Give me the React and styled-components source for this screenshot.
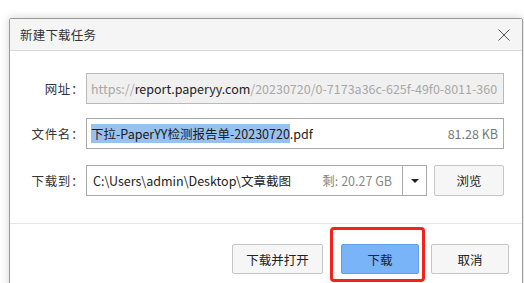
import React from 'react';
import styled, { createGlobalStyle } from 'styled-components';

const GlobalStyle = createGlobalStyle`
  html, body {
    margin: 0;
    padding: 0;
    background: #ffffff;
    overflow: hidden;
  }
  body {
    font-family: "Noto Sans CJK SC", "Noto Sans", sans-serif;
    color: #333;
  }
`;

const Page = styled.div`
  width: 524px;
  height: 283px;
  padding: 18px 0 0 9px;
  box-sizing: border-box;
  overflow: hidden;
`;

const Window = styled.div`
  position: relative;
  width: 514px;
  height: 300px;
  box-sizing: border-box;
  border: 1px solid #9a9a9a;
  border-radius: 2px 2px 0 0;
  background: #ffffff;
  box-shadow: 0 0 10px rgba(0, 0, 0, 0.18);
  display: flex;
  flex-direction: column;
`;

const TitleBar = styled.div`
  height: 31px;
  display: flex;
  align-items: center;
  justify-content: space-between;
  padding: 0 12px 0 10px;
  background: #f5f5f5;
  border-bottom: 1px solid #d9d9d9;
  font-size: 12.5px;
  letter-spacing: 0.2px;
  color: #333;
`;

const CloseIcon = styled.svg`
  width: 12px;
  height: 12px;
  display: block;
`;

const Body = styled.div`
  padding: 22px 18px 0 0;
  display: flex;
  flex-direction: column;
  gap: 14px;
`;

const Row = styled.div`
  display: grid;
  grid-template-columns: 74px 1fr;
  column-gap: 2px;
  align-items: center;
  margin-top: ${({ $extra }) => $extra || 0}px;
`;

const Label = styled.div`
  text-align: right;
  font-size: 12.5px;
  letter-spacing: 0.6px;
  color: #333;
`;

const Field = styled.div`
  height: 31px;
  box-sizing: border-box;
  border: 1px solid ${({ $disabled }) => ($disabled ? '#b9b9b9' : '#a9a9a9')};
  background: ${({ $disabled }) => ($disabled ? '#f0f0f0' : '#ffffff')};
  display: flex;
  align-items: center;
  padding: 0 5px 0 4px;
  font-size: 12.5px;
  white-space: nowrap;
  overflow: hidden;
  color: #222;
`;

const Muted = styled.span`
  color: #a8a8a8;
`;

const Selected = styled.span`
  background: #99c1f0;
  color: #1a1a1a;
`;

const Size = styled.span`
  margin-left: auto;
  color: #777;
`;

const PathLine = styled.div`
  display: flex;
  gap: 7px;
`;

const Combo = styled.div`
  flex: 1;
  height: 31px;
  box-sizing: border-box;
  border: 1px solid #a9a9a9;
  display: flex;
  font-size: 12.5px;
  color: #222;
`;

const ComboText = styled.div`
  flex: 1;
  display: flex;
  align-items: center;
  padding: 0 10px 0 6px;
  white-space: nowrap;
`;

const Free = styled.span`
  margin-left: auto;
  color: #888;
`;

const ComboArrow = styled.div`
  width: 23px;
  border-left: 1px solid #a9a9a9;
  display: flex;
  align-items: center;
  justify-content: center;

  &::after {
    content: '';
    border-left: 4px solid transparent;
    border-right: 4px solid transparent;
    border-top: 4px solid #222;
  }
`;

const Divider = styled.div`
  height: 1px;
  background: #e6e6e6;
  margin-top: 27px;
`;

const Footer = styled.div`
  display: flex;
  justify-content: flex-end;
  padding: 20px 13px 0 0;
`;

const Button = styled.div`
  position: relative;
  width: ${({ $w }) => $w || 78}px;
  height: 30px;
  box-sizing: border-box;
  margin-left: ${({ $gap }) => $gap || 0}px;
  border: 1px solid ${({ $primary }) => ($primary ? '#5e9fe8' : '#c6c6c6')};
  background: ${({ $primary }) => ($primary ? '#79b3f8' : '#f6f6f6')};
  border-radius: 2px;
  display: flex;
  align-items: center;
  justify-content: center;
  font-size: 12.5px;
  color: #222;
`;

const Browse = styled(Button)`
  width: 70px;
  height: 31px;
`;

const Highlight = styled.div`
  position: absolute;
  left: -12px;
  top: -18px;
  width: 95px;
  height: 55px;
  box-sizing: border-box;
  border: 3px solid #f5221b;
  border-radius: 4px;
  pointer-events: none;
`;

export default function App() {
  return (
    <>
      <GlobalStyle />
      <Page>
        <Window>
          <TitleBar>
            <span>新建下载任务</span>
            <CloseIcon viewBox="0 0 12 12">
              <path d="M0.5 0.5 L11.5 11.5 M11.5 0.5 L0.5 11.5" stroke="#555" strokeWidth="1" fill="none" />
            </CloseIcon>
          </TitleBar>
          <Body>
            <Row>
              <Label>网址：</Label>
              <Field $disabled>
                <Muted>https://</Muted>
                report.paperyy.com
                <Muted>/20230720/0-7173a36c-625f-49f0-8011-360</Muted>
              </Field>
            </Row>
            <Row>
              <Label>文件名：</Label>
              <Field>
                <Selected>下拉-PaperYY检测报告单-20230720</Selected>
                .pdf
                <Size>81.28 KB</Size>
              </Field>
            </Row>
            <Row $extra={2}>
              <Label>下载到：</Label>
              <PathLine>
                <Combo>
                  <ComboText>
                    C:\Users\admin\Desktop\文章截图
                    <Free>剩: 20.27 GB</Free>
                  </ComboText>
                  <ComboArrow />
                </Combo>
                <Browse>浏览</Browse>
              </PathLine>
            </Row>
          </Body>
          <Divider />
          <Footer>
            <Button $w={91}>下载并打开</Button>
            <Button $primary $gap={18}>
              下载
              <Highlight />
            </Button>
            <Button $gap={12}>取消</Button>
          </Footer>
        </Window>
      </Page>
    </>
  );
}
